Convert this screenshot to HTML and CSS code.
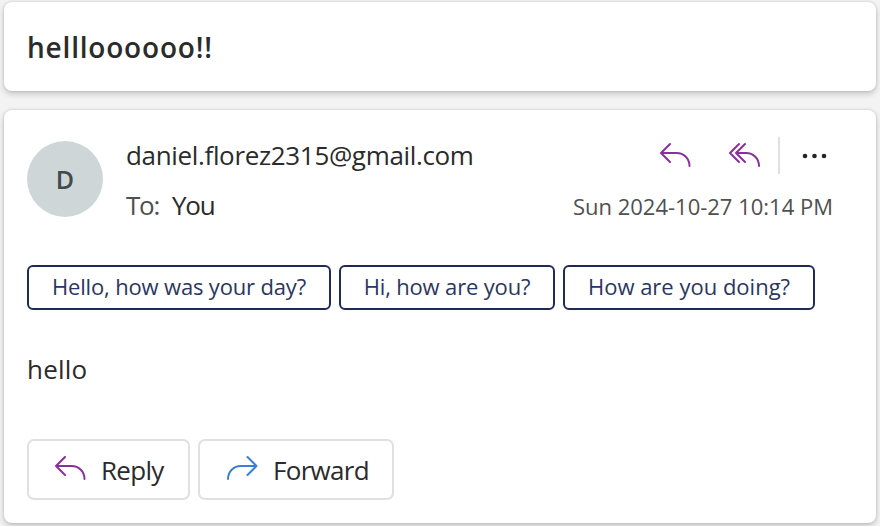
FILE: index.html
```html
<!DOCTYPE html>
<html lang="en">
<head>
<meta charset="utf-8">
<title>Mail</title>
<link rel="stylesheet" href="styles.css">
</head>
<body>
<header class="card subject"><h1>hellloooooo!!</h1></header>
<main class="card message">
  <div class="head">
    <div class="avatar">D</div>
    <div class="people">
      <div class="sender">daniel.florez2315@gmail.com</div>
      <div class="recipient"><span class="to">To:</span><span class="you">You</span></div>
    </div>
    <div class="meta">
      <div class="tools">
        <svg class="reply-icon" width="34" height="28" viewBox="0 0 34 28"><path d="M12 2 3 11l9 9M3 11H18.500C26 11 31.500 16.500 31.500 24"/></svg>
        <svg class="all-icon" width="34" height="28" viewBox="0 0 34 28"><path d="M11 2 2 11 11 20M17 2 8 11 17 20M8 11H18C25.500 11 31 16.500 31 24"/></svg>
        <span class="divider"></span>
        <svg class="more-icon" width="26" height="6" viewBox="0 0 26 6"><circle cx="3" cy="3" r="2.300"/><circle cx="12.500" cy="3" r="2.300"/><circle cx="22" cy="3" r="2.300"/></svg>
      </div>
      <time class="date">Sun 2024-10-27 10:14 PM</time>
    </div>
  </div>
  <div class="suggestions">
    <button class="chip c1">Hello, how was your day?</button>
    <button class="chip c2">Hi, how are you?</button>
    <button class="chip c3">How are you doing?</button>
  </div>
  <p class="text">hello</p>
  <div class="actions">
    <button class="action reply"><svg width="34" height="28" viewBox="0 0 34 28"><path d="M12 2 3 11l9 9M3 11H18.500C26 11 31.500 16.500 31.500 24"/></svg><span>Reply</span></button>
    <button class="action forward"><svg width="34" height="28" viewBox="0 0 34 28"><path d="M22.500 2 31.500 11l-9 9M31.500 11H16C8.500 11 3 16.500 3 24"/></svg><span>Forward</span></button>
  </div>
</main>
</body>
</html>
```
FILE: styles.css
```css
* { box-sizing: border-box; }
body {
  margin: 0;
  height: 526px;
  overflow: hidden;
  padding: 2px 4px 0;
  background: #f3f3f3;
  color: #2b2b2b;
  font-family: "Open Sans", "Noto Sans", sans-serif;
  font-size: 26px;
  white-space: nowrap;
}
button { font: inherit; color: inherit; background: #fff; padding: 0; white-space: nowrap; }
svg { fill: none; stroke: #8a2f9f; stroke-width: 2; stroke-linecap: round; stroke-linejoin: round; flex: none; }
.card {
  width: 872px;
  background: #fff;
  border-radius: 8px;
  box-shadow: 0 0 3px rgba(0,0,0,.15), 0 3px 6px rgba(0,0,0,.18);
}
.subject { height: 89px; padding: 0 23px; display: flex; align-items: center; }
h1 { margin: 0; font-size: 28px; line-height: 36px; font-weight: 600; letter-spacing: .8px; }
.message { height: 413px; margin-top: 19px; padding: 27px 43px 0 23px; }
.head { display: flex; height: 96px; }
.avatar {
  width: 76px; height: 76px; margin-top: 4px;
  border-radius: 50%;
  background: #ced6d8; color: #424a4c;
  display: flex; align-items: center; justify-content: center;
  font-size: 25px; font-weight: 600;
}
.people { margin-left: 23px; }
.sender { height: 36px; line-height: 36px; letter-spacing: -.34px; }
.recipient { height: 36px; line-height: 36px; margin-top: 14px; display: flex; letter-spacing: -1.2px; }
.to { width: 46px; color: #505050; }
.meta { margin-left: auto; }
.tools { height: 37px; display: flex; align-items: center; justify-content: flex-end; }
.all-icon { margin-left: 36px; }
.divider { width: 2px; height: 37px; background: #e0e0e0; margin-left: 16px; }
.more-icon { margin-left: 22px; margin-right: 5px; fill: #242424; stroke: none; }
.date { display: block; margin-top: 17px; line-height: 30px; font-size: 22px; color: #505050; text-align: right; }
.suggestions { display: flex; gap: 8px; margin-top: 32px; }
.chip { height: 45px; padding-bottom: 3px; border: 2px solid #1f2b57; border-radius: 6px; color: #2b3660; font-size: 22px; line-height: 30px; letter-spacing: -.16px; }
.c1 { width: 304px; }
.c2 { width: 216px; }
.c3 { width: 252px; letter-spacing: 0; }
.text { margin: 41px 0 0; line-height: 36px; letter-spacing: .2px; }
.actions { display: flex; gap: 8px; margin-top: 52px; }
.action { height: 61px; border: 2px solid #e0e0e0; border-radius: 7px; display: flex; align-items: center; padding-left: 25px; gap: 14px; line-height: 36px; letter-spacing: -.7px; }
.action svg { margin: 0 0 2px -1px; }
.reply { width: 163px; }
.forward { width: 196px; }
.forward svg { stroke: #3a7fd5; margin-left: 0; }
```
